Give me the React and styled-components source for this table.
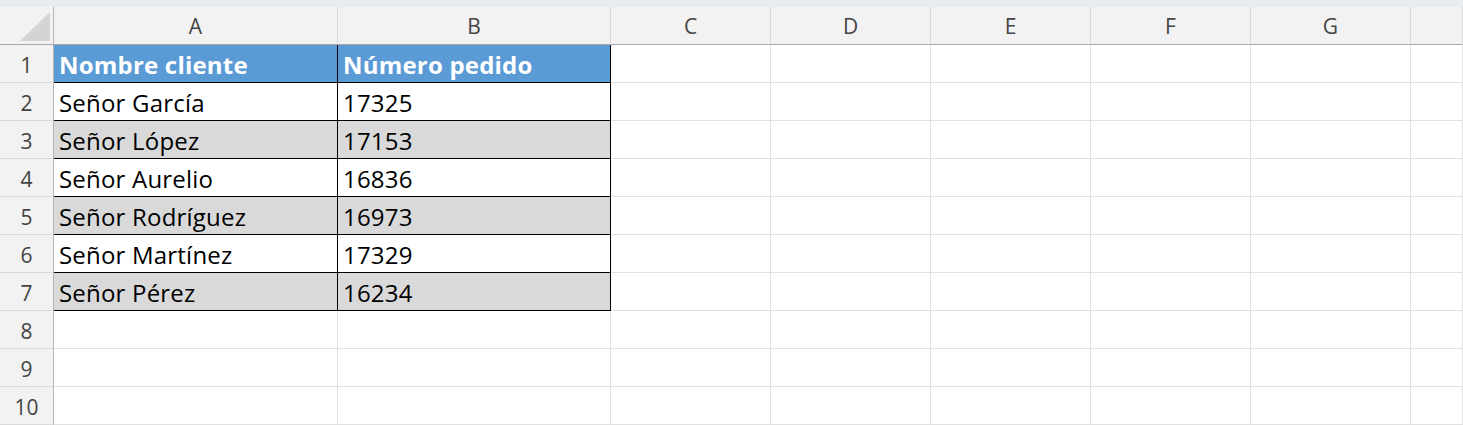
import React from "react";
import styled, { createGlobalStyle } from "styled-components";

const GlobalStyle = createGlobalStyle`
  html, body {
    margin: 0;
    padding: 0;
    background: #ffffff;
    overflow: hidden;
  }
  * {
    box-sizing: border-box;
  }
`;

const Page = styled.div`
  width: 1463px;
  height: 425px;
  display: flex;
  flex-direction: column;
  font-family: "Open Sans", "Noto Sans", sans-serif;
`;

const TopStrip = styled.div`
  height: 7px;
  background: #e8ebef;
  flex: none;
`;

const Sheet = styled.div`
  display: grid;
  grid-template-columns: 54px 284px 273px repeat(5, 160px) 1fr;
  grid-auto-rows: 38px;
`;

const Corner = styled.div`
  background: #f2f2f2;
  border-right: 1px solid #b4b4b4;
  border-bottom: 1px solid #a8a8a8;
  display: flex;
  align-items: flex-end;
  justify-content: flex-end;
  padding: 0 3px 3px 0;
`;

const ColHead = styled.div`
  background: #f2f2f2;
  border-right: 1px solid #dadada;
  border-bottom: 1px solid #a8a8a8;
  color: #444444;
  font-size: 21px;
  display: flex;
  align-items: center;
  justify-content: center;
  padding-top: 1px;
`;

const RowHead = styled.div`
  background: #f2f2f2;
  border-right: 1px solid #b4b4b4;
  border-bottom: 1px solid #dadada;
  color: #444444;
  font-size: 21px;
  display: flex;
  align-items: center;
  justify-content: center;
  padding-top: 2px;
`;

const Cell = styled.div`
  background: ${(p) => (p.$kind === "head" ? "#5b9bd5" : p.$kind === "band" ? "#d9d9d9" : "#ffffff")};
  color: ${(p) => (p.$kind === "head" ? "#ffffff" : "#000000")};
  font-weight: ${(p) => (p.$kind === "head" ? 700 : 400)};
  font-size: 24px;
  letter-spacing: 0.2px;
  border-right: 1px solid ${(p) => (p.$table ? "#000000" : "#e1e1e1")};
  border-bottom: 1px solid ${(p) => (p.$table ? "#000000" : "#e1e1e1")};
  display: flex;
  align-items: center;
  padding: 1px 0 0 5px;
  white-space: nowrap;
  overflow: hidden;
`;

const columns = ["A", "B", "C", "D", "E", "F", "G", ""];

const data = [
  ["Nombre cliente", "Número pedido"],
  ["Señor García", "17325"],
  ["Señor López", "17153"],
  ["Señor Aurelio", "16836"],
  ["Señor Rodríguez", "16973"],
  ["Señor Martínez", "17329"],
  ["Señor Pérez", "16234"],
];

export default function App() {
  const rows = Array.from({ length: 10 }, (_, i) => i);
  return (
    <Page>
      <GlobalStyle />
      <TopStrip />
      <Sheet>
        <Corner>
          <svg width="30" height="29" viewBox="0 0 30 29">
            <polygon points="30,0 30,29 0,29" fill="#d4d4d4" />
          </svg>
        </Corner>
        {columns.map((c, i) => (
          <ColHead key={i}>{c}</ColHead>
        ))}
        {rows.map((r) => (
          <React.Fragment key={r}>
            <RowHead>{r + 1}</RowHead>
            {columns.map((_, ci) => {
              const inTable = r < data.length && ci < 2;
              const kind = !inTable ? "plain" : r === 0 ? "head" : r % 2 === 0 ? "band" : "plain";
              return (
                <Cell key={ci} $table={inTable} $kind={kind}>
                  {inTable ? data[r][ci] : ""}
                </Cell>
              );
            })}
          </React.Fragment>
        ))}
      </Sheet>
    </Page>
  );
}
